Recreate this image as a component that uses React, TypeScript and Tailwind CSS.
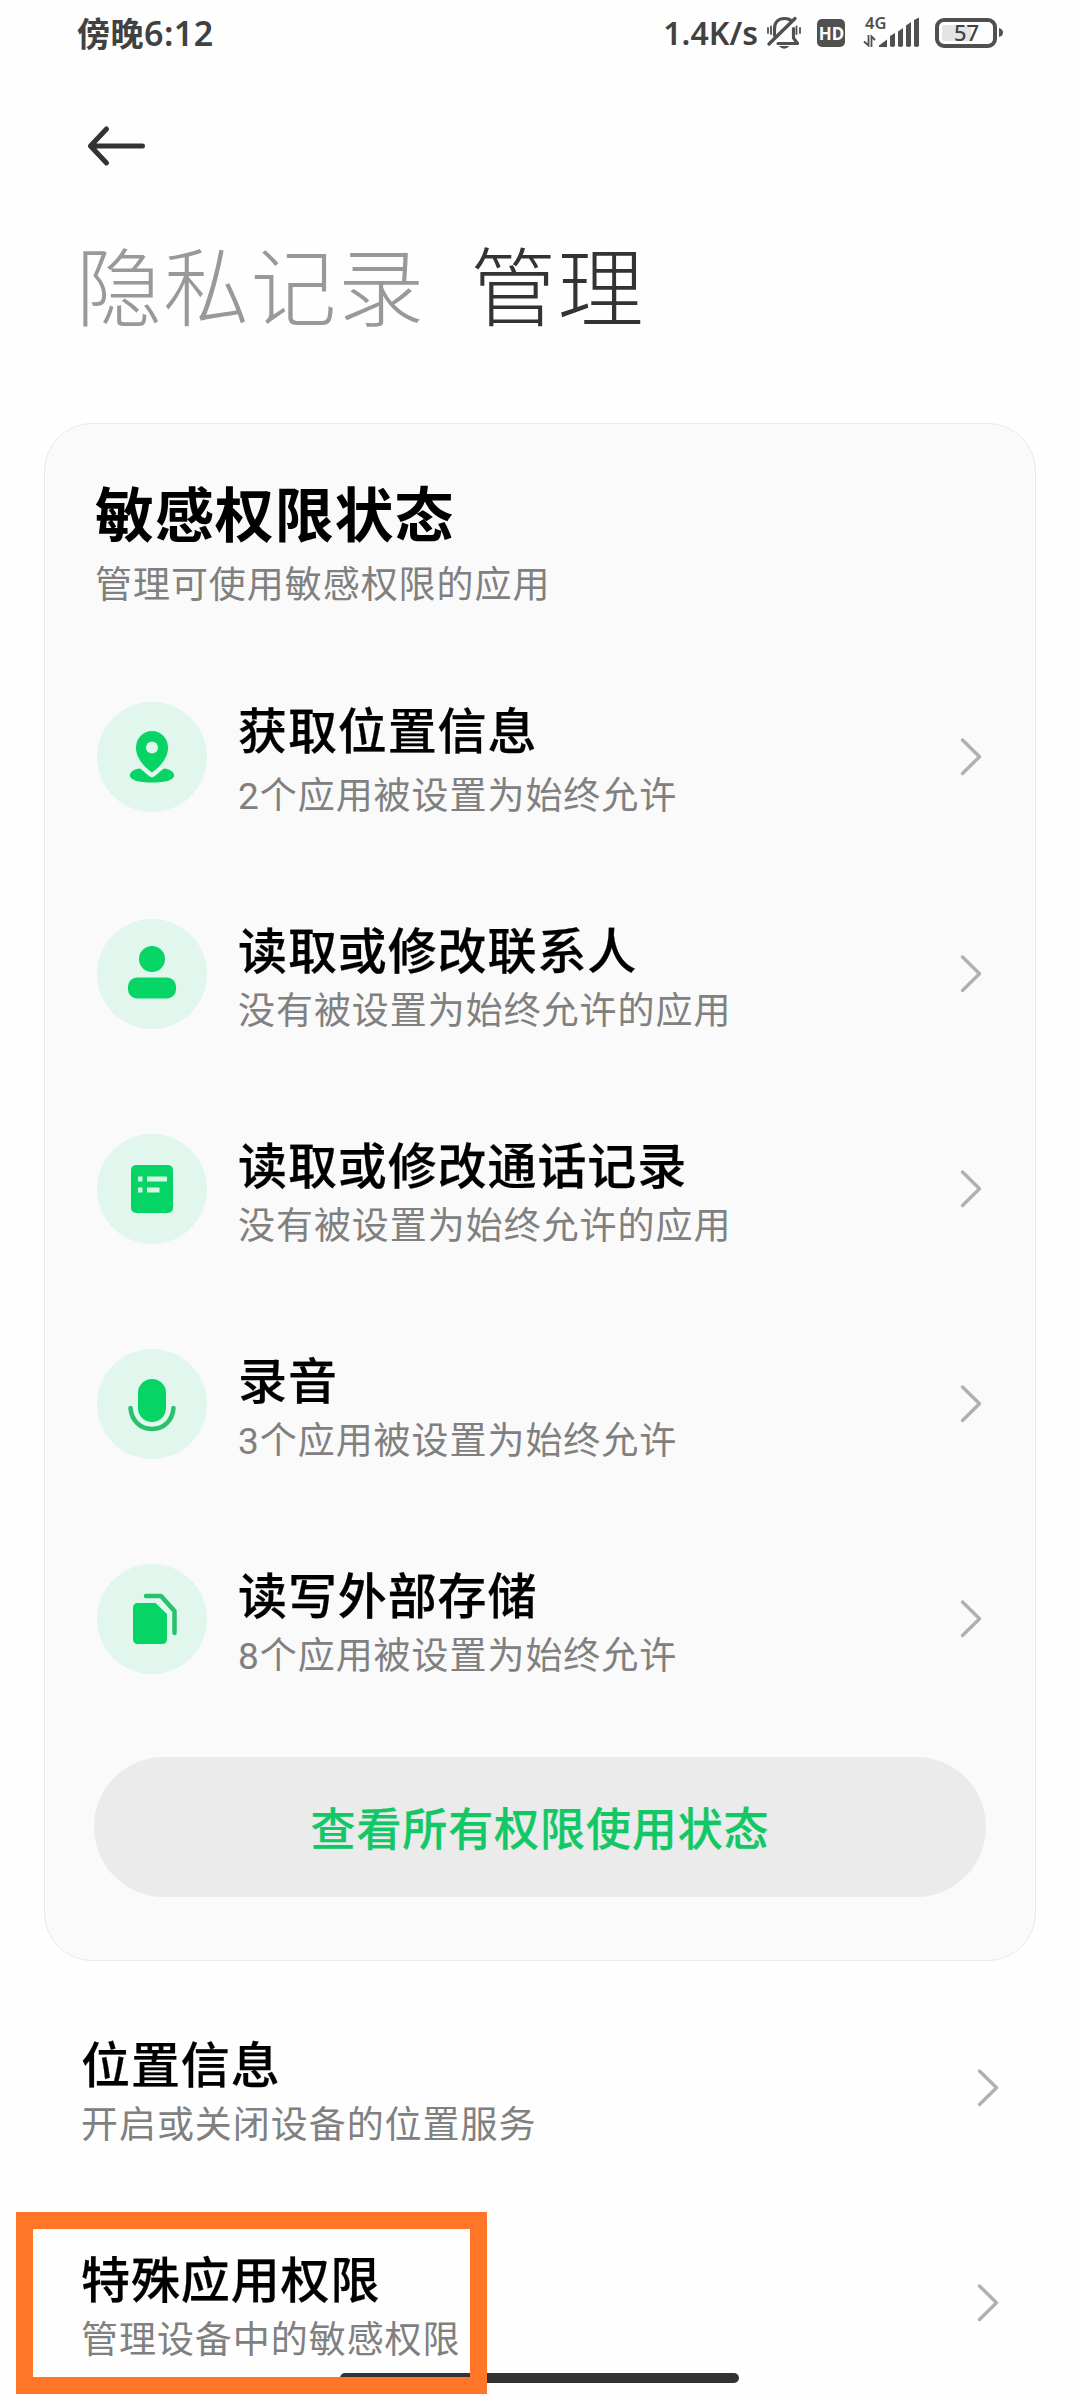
import React from 'react';

const GREEN = '#06d464';

function Chevron() {
  return (
    <svg className="h-[42px] w-[24px] shrink-0" viewBox="0 0 24 42" fill="none" stroke="#b0b0b0" strokeWidth="3.4" strokeLinecap="round" strokeLinejoin="round">
      <path d="M3.5 4L20.5 20.700L3.5 37.500" />
    </svg>
  );
}

function StatusBar() {
  return (
    <header className="flex h-[66px] items-center justify-between pl-[77px] pr-[76px] text-[#414141]">
      <div className="whitespace-nowrap pb-[2px] text-[33px] font-bold leading-[64px]">
        <span className="tracking-[0.5px]">傍晚</span>
        <span className="font-['Noto_Sans','Noto_Sans_CJK_SC',sans-serif] text-[34px] font-semibold tracking-[0.5px]">6:12</span>
      </div>
      <div className="flex items-center">
        <span className="whitespace-nowrap font-['Noto_Sans',sans-serif] text-[32px] font-semibold leading-[66px]">1.4K/s</span>
        <svg className="ml-2 h-[66px] w-[238px]" viewBox="766 0 238 66" fill="none">
          <g stroke="#505050" strokeLinecap="round" strokeLinejoin="round">
            <path d="M769 44L795 18.5" strokeWidth="3.4" />
            <path d="M774.5 35.500V29C774.500 22 778.500 18.500 784.500 18.500C787.500 18.500 789.500 19 791 20.500" strokeWidth="3.2" />
            <path d="M778 43.500H797.500L793.500 38V28.500" strokeWidth="3.2" />
            <path d="M768 28V33M771 26.500V34M796.500 26.500V34M800 28V33" strokeWidth="1.800" />
          </g>
          <path d="M779 46H789.500Q784 51.500 779 46Z" fill="#505050" />
          <rect x="817" y="19" width="28" height="28" rx="5" fill="#505050" />
          <text x="831.500" y="40" fill="#fff" fontSize="17" fontWeight="700" textAnchor="middle" fontFamily="Noto Sans, sans-serif">HD</text>
          <text x="865" y="28.500" fill="#505050" fontSize="16.500" fontWeight="600" fontFamily="Noto Sans, sans-serif">4G</text>
          <path d="M868.500 35V45.500L864 41.500M871.500 47V36.500L875 40" stroke="#505050" strokeWidth="1.800" />
          <path d="M879 47V45.500L887 39.500V47ZM890 36L895 33V46Q892.500 48 890 46ZM898 31.500L903 28V46Q900.500 48 898 46ZM906 25.500L911 22V46Q908.500 48 906 46ZM914 20L919 17.500V46Q916.500 48 914 46Z" fill="#505050" />
          <rect x="937" y="20" width="58" height="26" rx="7" stroke="#505050" strokeWidth="4" />
          <rect x="942" y="25" width="29" height="16" rx="2" fill="#e4e4e4" />
          <path d="M999 28Q1003 29 1003 32.500Q1003 36 999 37Z" fill="#505050" />
          <text x="966.500" y="41" fill="#414141" fontSize="22" fontWeight="500" textAnchor="middle" fontFamily="Noto Sans, sans-serif">57</text>
        </svg>
      </div>
    </header>
  );
}

const icons: Record<string, React.ReactNode> = {
  location: (
    <>
      <path d="M42 66.500C36 67.500 32 71 33 74.500C35 79 44 80.500 55 80.500S75 79 77 74.500C78 71 74 67.500 68 66.500C65 66.500 61 73 55 75.500C49 73 45 66.500 42 66.500Z" fill={GREEN} />
      <path d="M55 70.500C47 65 39 56 39 45.500A16 16.500 0 0 1 71 45.500C71 56 63 65 55 70.500Z" fill={GREEN} />
      <circle cx="55" cy="45.500" r="6" fill="#e1f6ec" />
    </>
  ),
  contacts: (
    <>
      <circle cx="55" cy="40" r="13" fill={GREEN} />
      <rect x="31" y="58.500" width="48" height="21" rx="9" fill={GREEN} />
    </>
  ),
  calls: (
    <>
      <rect x="34" y="31" width="42" height="48" rx="5" fill={GREEN} />
      <path d="M41 45H45.500M50 45H70M41 56H45.500M50 56H62.500" stroke="#d6f7e4" strokeWidth="5" />
    </>
  ),
  record: (
    <>
      <rect x="41" y="30" width="28" height="43" rx="14" fill={GREEN} />
      <path d="M33.500 59C34.500 71.500 43 80 55 80S75.500 71.500 76.500 59" fill="none" stroke="#27c26b" strokeWidth="4.500" strokeLinecap="round" />
    </>
  ),
  storage: (
    <>
      <path d="M41 39H58.500L70 50V75Q70 80 65 80H41Q36 80 36 75V44Q36 39 41 39Z" fill={GREEN} />
      <path d="M49 32H64L77.500 47V69" fill="none" stroke="#27c26b" strokeWidth="4.500" strokeLinecap="round" strokeLinejoin="round" />
    </>
  ),
};

const permissions = [
  { icon: 'location', title: '获取位置信息', note: '2个应用被设置为始终允许' },
  { icon: 'contacts', title: '读取或修改联系人', note: '没有被设置为始终允许的应用' },
  { icon: 'calls', title: '读取或修改通话记录', note: '没有被设置为始终允许的应用' },
  { icon: 'record', title: '录音', note: '3个应用被设置为始终允许' },
  { icon: 'storage', title: '读写外部存储', note: '8个应用被设置为始终允许' },
];

const titleClass = 'whitespace-nowrap text-[49px] font-medium leading-[60px] tracking-[0.9px] text-black [-webkit-text-stroke:0.25px_#000]';
const noteClass = "whitespace-nowrap font-['Roboto','Noto_Sans_CJK_SC',sans-serif] text-[37px] leading-[44px] tracking-[0.95px] text-[#808080]";

function RowText({ title, note, wide }: { title: string; note: string; wide?: boolean }) {
  return (
    <div className={wide ? 'flex flex-1 flex-col gap-[17px] pt-[3px]' : 'flex flex-1 flex-col gap-[12px] pt-[3px]'}>
      <h3 className={titleClass}>{title}</h3>
      <p className={noteClass}>{note}</p>
    </div>
  );
}

function PermissionRow({ icon, title, note, first }: { icon: string; title: string; note: string; first: boolean }) {
  return (
    <li className={first ? 'mb-[107px] flex h-[110px] items-center gap-[31px]' : 'mb-[105px] flex h-[110px] items-center gap-[31px] last:mb-0'}>
      <svg className="h-[110px] w-[110px] shrink-0 rounded-full bg-[#e1f6ec]" viewBox="0 0 110 110">{icons[icon]}</svg>
      <RowText title={title} note={note} wide={first} />
      <Chevron />
    </li>
  );
}

function PlainRow({ title, note }: { title: string; note: string }) {
  return (
    <li className="flex h-[110px] items-center">
      <RowText title={title} note={note} />
      <Chevron />
    </li>
  );
}

export default function App() {
  return (
    <div className="relative h-[2400px] w-[1080px] overflow-hidden bg-[#fefefe] font-['Noto_Sans_CJK_SC',sans-serif]">
      <StatusBar />
      <nav className="flex h-[155px] items-center pl-[86px] pt-[5px]">
        <svg className="h-[44px] w-[62px]" viewBox="0 0 62 44" fill="none" stroke="#333" strokeWidth="5" strokeLinecap="round" strokeLinejoin="round">
          <path d="M56.500 22H4.500M20.500 5L4.500 22L20.500 39" />
        </svg>
      </nav>
      <div className="flex h-[202px] items-start gap-[45px] pl-[76px] text-[86px] font-light leading-[123px] tracking-[1.3px]">
        <span className="text-[#999]">隐私记录</span>
        <span className="text-[#333]">管理</span>
      </div>
      <section className="mx-[44px] h-[1538px] rounded-[48px] border border-[#e9e9e9] bg-[#fafafa] px-[52px] pt-[52px]">
        <h2 className="-ml-[2px] mb-[16px] text-[59px] font-bold leading-[72px] tracking-[0.9px] text-black">敏感权限状态</h2>
        <div className="-ml-[2px]">
          <p className={noteClass}>管理可使用敏感权限的应用</p>
        </div>
        <ul className="mt-[94px]">
          {permissions.map((item, i) => (
            <PermissionRow key={item.title} {...item} first={i === 0} />
          ))}
        </ul>
        <button className="-mx-[3px] mt-[83px] flex h-[140px] w-[892px] items-center justify-center rounded-full bg-[#ebebeb] pb-[1px] text-[45px] font-medium tracking-[0.9px] text-[#12c765] [-webkit-text-stroke:0.25px_#12c765]">查看所有权限使用状态</button>
      </section>
      <ul className="mt-[72px] flex flex-col gap-[105px] pl-[81px] pr-[80px]">
        <PlainRow title="位置信息" note="开启或关闭设备的位置服务" />
        <PlainRow title="特殊应用权限" note="管理设备中的敏感权限" />
      </ul>
      <div className="absolute left-[340px] top-[2373px] h-[10px] w-[399px] rounded-full bg-[#333]" />
      <div className="absolute left-[16px] top-[2212px] h-[182px] w-[471px] border-[17px] border-[#ff7629]" />
    </div>
  );
}
